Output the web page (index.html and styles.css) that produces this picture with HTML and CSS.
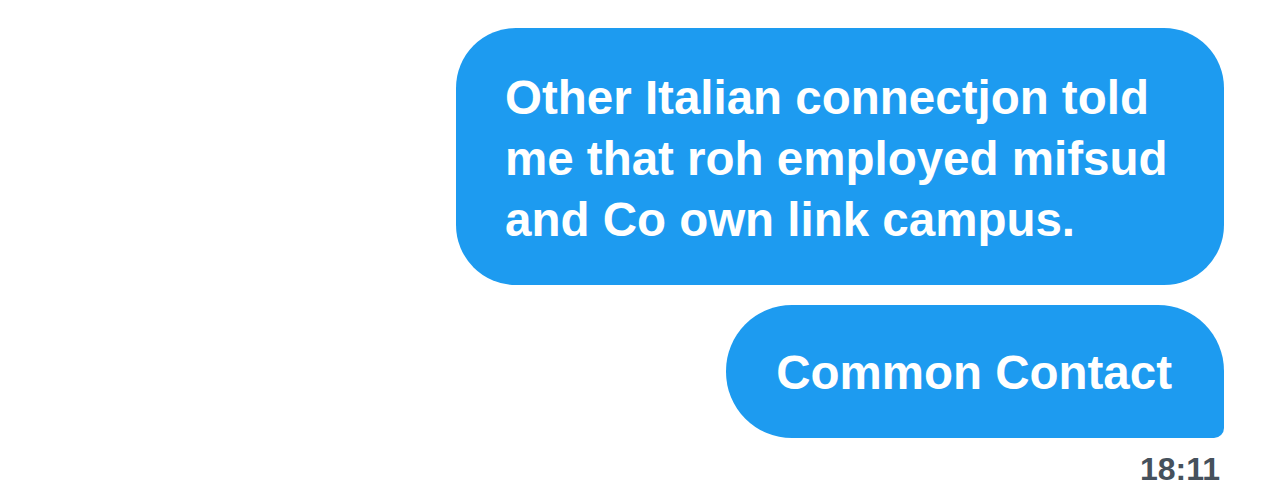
FILE: index.html
```html
<!DOCTYPE html>
<html lang="en">
<head>
    <meta charset="UTF-8">
    <title>Messages</title>
    <link rel="stylesheet" href="styles.css">
</head>
<body>
    <div class="thread">
        <div class="bubble bubble-first">Other Italian connectjon told me that roh employed mifsud and Co own link campus.</div>
        <div class="bubble bubble-last">Common Contact</div>
        <div class="time">18:11</div>
    </div>
</body>
</html>
```

FILE: styles.css
```css
body {
    margin: 0;
    background: #fff;
    font-family: "Liberation Sans", Arial, sans-serif;
}
.thread {
    display: flex;
    flex-direction: column;
    align-items: flex-end;
    padding: 28px 60px 0 0;
}
.bubble {
    background-color: #1d9bf0;
    color: #fff;
    font-weight: bold;
    font-size: 47.5px;
    line-height: 61px;
    box-sizing: border-box;
}
.bubble-first {
    width: 768px;
    padding: 39px 50px 35px 49px;
    border-radius: 60px;
}
.bubble-last {
    margin-top: 20px;
    padding: 37px 52px 35px 50px;
    border-radius: 66px 66px 10px 66px;
}
.time {
    margin-top: 13px;
    margin-right: 4px;
    font-size: 32px;
    font-weight: bold;
    color: #46515c;
}
```
